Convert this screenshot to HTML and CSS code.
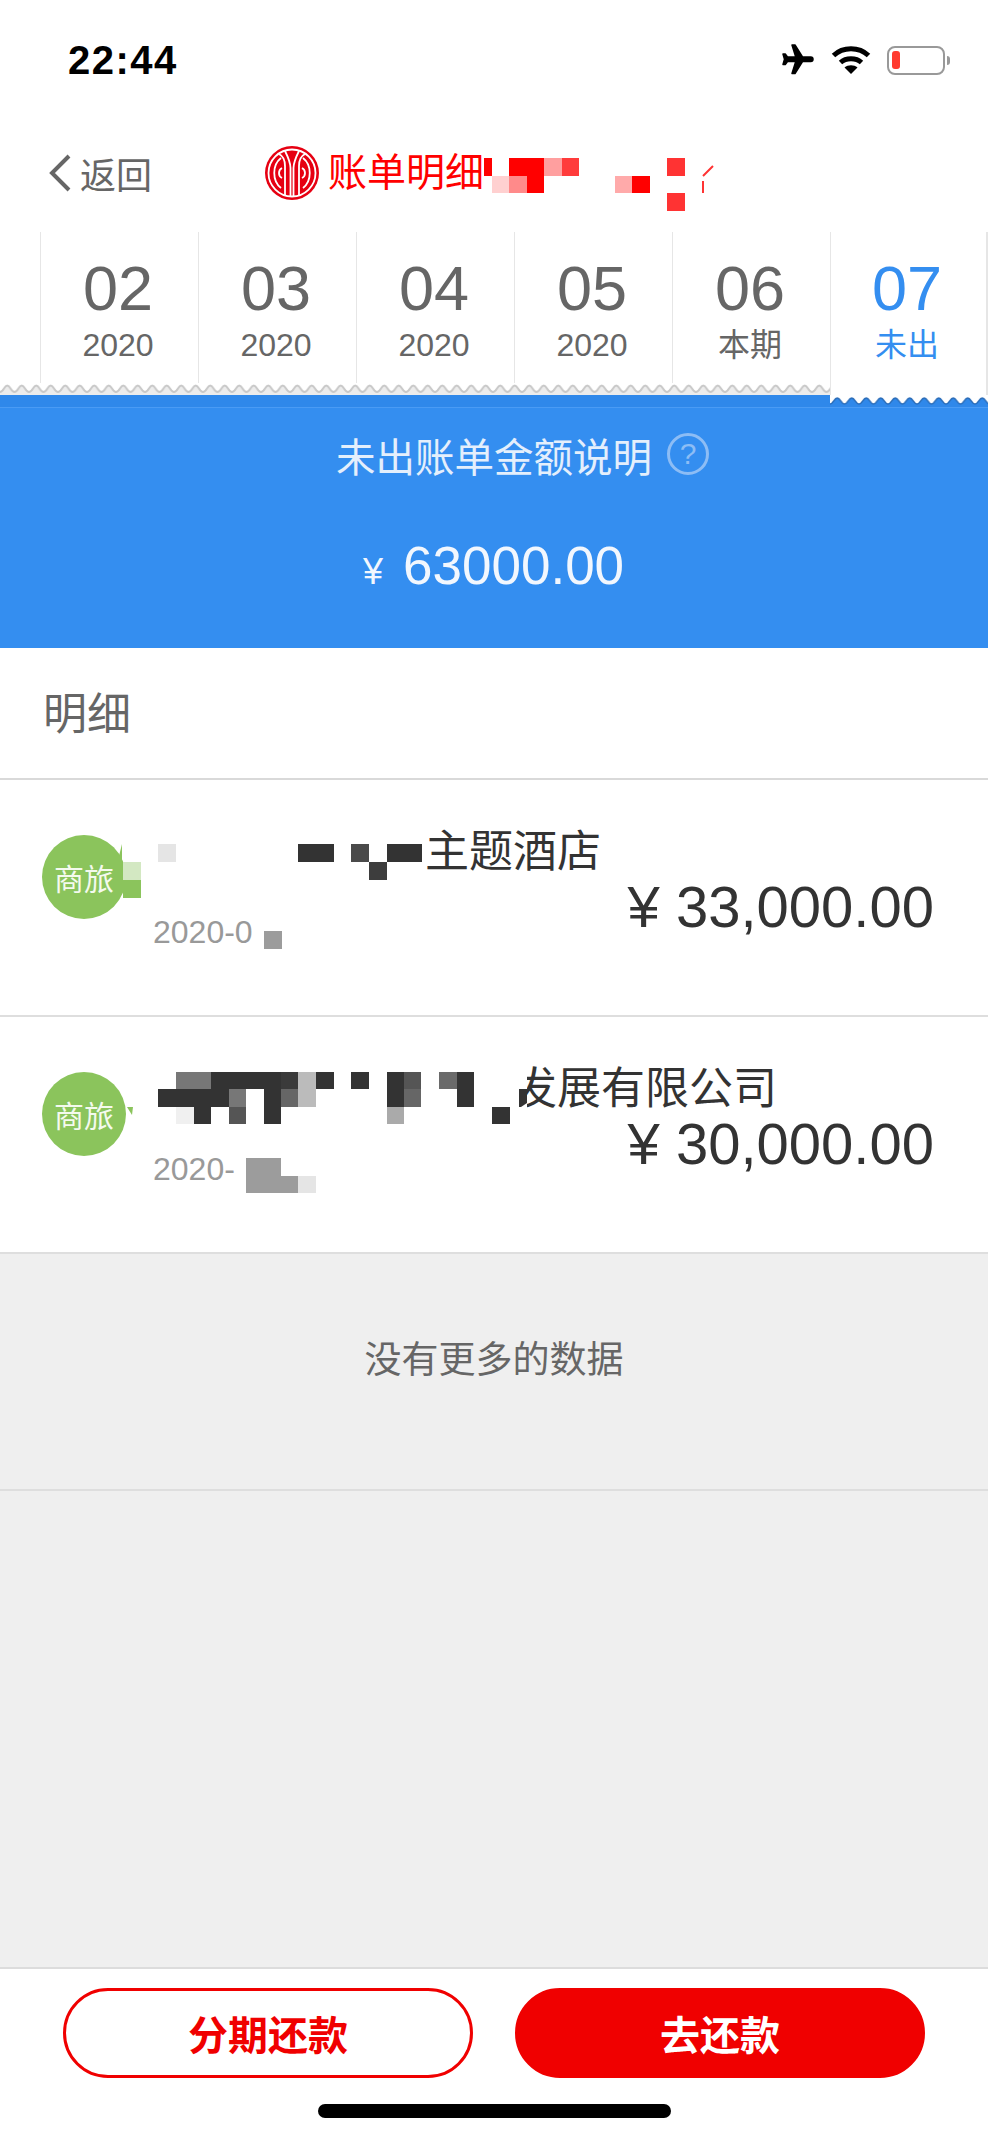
FILE: index.html
```html
<!DOCTYPE html>
<html lang="zh-CN">
<head>
    <meta charset="UTF-8">
    <meta name="viewport" content="width=device-width, initial-scale=1.0">
    <title>账单明细</title>
    <link rel="stylesheet" href="styles.css">
</head>
<body>
    <div class="status-bar">
        <span class="time">22:44</span>
        <div class="status-icons">
            <svg class="icon-plane" width="38" height="36" viewBox="0 0 24 24"><path transform="rotate(90 12 12)" stroke="#000" stroke-width="1" stroke-linejoin="round" d="M21 16v-2l-8-5V3.500c0-.83-.67-1.500-1.500-1.500S10 2.670 10 3.500V9l-8 5v2l8-2.500V19l-2 1.500V22l3.500-1 3.500 1v-1.500L13 19v-5.500l8 2.500z"/></svg>
            <svg class="icon-wifi" width="40" height="30" viewBox="0 0 40 30">
                <path d="M2.500 10.500C12 1.500 28 1.500 37.500 10.500" fill="none" stroke="#000" stroke-width="5"/>
                <path d="M9.500 17.500C15 12.500 25 12.500 30.500 17.500" fill="none" stroke="#000" stroke-width="5"/>
                <path d="M13.500 22.500C17 19.500 23 19.500 26.500 22.500L20 29z"/>
            </svg>
            <div class="battery"><span class="battery-level"></span></div>
            <span class="battery-nub"></span>
        </div>
    </div>

    <div class="nav">
        <div class="back">
            <svg width="24" height="38" viewBox="0 0 24 38"><path d="M21 2 4 19l17 17" fill="none" stroke="#666" stroke-width="4"/></svg>
            <span>返回</span>
        </div>
        <svg class="logo" width="54" height="54" viewBox="0 0 54 54">
            <circle cx="27" cy="27" r="27" fill="#e60012"/>
            <g fill="none" stroke="#fff" stroke-width="1.800">
                <circle cx="27" cy="27" r="23.500"/>
                <path d="M16 12C7 19 7 35 16 42"/>
                <path d="M38 12C47 19 47 35 38 42"/>
                <path d="M17 22C13 24 13 30 17 32"/>
                <path d="M37 22C41 24 41 30 37 32"/>
                <path d="M20 50V20C20 13 18 10 14 8"/>
                <path d="M34 50V20C34 13 36 10 40 8"/>
                <path d="M25.500 50V22C25.500 16 23 11 20 5"/>
                <path d="M28.500 50V22C28.500 16 31 11 34 5"/>
            </g>
        </svg>
        <span class="nav-title">账单明细</span>
        <svg class="title-mosaic" width="240" height="70" viewBox="0 0 240 70">
            <rect x="0" y="15" width="8" height="18" fill="#f00"/>
            <rect x="25" y="15" width="35" height="18" fill="#f00"/>
            <rect x="60" y="15" width="18" height="18" fill="#ff9f9f"/>
            <rect x="78" y="15" width="17" height="18" fill="#ff3b3b"/>
            <rect x="8" y="33" width="17" height="17" fill="#ffd0d0"/>
            <rect x="25" y="33" width="18" height="17" fill="#ff8a8a"/>
            <rect x="43" y="33" width="17" height="17" fill="#f00"/>
            <rect x="131" y="33" width="17" height="17" fill="#ffaaaa"/>
            <rect x="148" y="33" width="18" height="17" fill="#f00"/>
            <rect x="183" y="15" width="18" height="18" fill="#ff3333"/>
            <rect x="183" y="50" width="18" height="18" fill="#ff3333"/>
            <path d="M229 23 219 33M219 38V50" fill="none" stroke="#f33" stroke-width="2"/>
        </svg>
    </div>

    <div class="tabs">
        <div class="tab"><span class="tab-month">02</span><span class="tab-year">2020</span></div>
        <div class="tab"><span class="tab-month">03</span><span class="tab-year">2020</span></div>
        <div class="tab"><span class="tab-month">04</span><span class="tab-year">2020</span></div>
        <div class="tab"><span class="tab-month">05</span><span class="tab-year">2020</span></div>
        <div class="tab"><span class="tab-month">06</span><span class="tab-year">本期</span></div>
        <div class="tab active"><span class="tab-month">07</span><span class="tab-year">未出</span></div>
        <svg class="tab-edge" width="830" height="12">
            <defs>
                <pattern id="edge-grey" width="14.500" height="12" patternUnits="userSpaceOnUse">
                    <path d="M0 9C3.500 9 4 2.500 7.250 2.500C10.500 2.500 11 9 14.500 9V12H0Z" fill="#ececec"/>
                    <path d="M0 9C3.500 9 4 2.500 7.250 2.500C10.500 2.500 11 9 14.500 9" fill="none" stroke="#c8c8c8" stroke-width="2"/>
                </pattern>
            </defs>
            <rect width="830" height="12" fill="url(#edge-grey)"/>
        </svg>
    </div>

    <div class="summary">
        <svg class="active-edge" width="158" height="10">
            <defs>
                <pattern id="edge-white" width="14.500" height="10" patternUnits="userSpaceOnUse">
                    <path d="M0 0H14.500V9C11 9 10.500 3 7.250 3C4 3 3.500 9 0 9Z" fill="#fff"/>
                    <path d="M0 9C3.500 9 4 3 7.250 3C10.500 3 11 9 14.500 9" fill="none" stroke="#2a6cb8" stroke-width="1.500"/>
                </pattern>
            </defs>
            <rect width="158" height="10" fill="url(#edge-white)"/>
        </svg>
        <div class="summary-band"></div>
        <div class="summary-title">
            <span>未出账单金额说明</span>
            <span class="help">?</span>
        </div>
        <div class="summary-amount"><span class="yen">¥</span><span>63000.00</span></div>
    </div>

    <div class="list-head">明细</div>

    <div class="row">
        <div class="avatar">
            商旅
            <svg class="avatar-tail" width="22" height="62" viewBox="0 0 22 62">
                <path d="M3 8V26L0 20z" fill="#8bc45c"/>
                <rect x="4" y="26" width="18" height="18" fill="#d3e8c2"/>
                <rect x="4" y="44" width="18" height="18" fill="#8bc45c"/>
            </svg>
        </div>
        <div class="info">
            <div class="name">
                <svg class="name-mosaic" width="272" height="60" viewBox="0 0 272 60">
                    <rect x="5" y="22" width="18" height="18" fill="#e5e5e5"/>
                    <rect x="145" y="22" width="36" height="18" fill="#333"/>
                    <rect x="198" y="22" width="18" height="18" fill="#4a4a4a"/>
                    <rect x="216" y="40" width="18" height="18" fill="#3d3d3d"/>
                    <rect x="234" y="22" width="35" height="18" fill="#333"/>
                </svg>
                <span>主题酒店</span>
            </div>
            <div class="date">
                <span>2020-0</span>
                <svg width="30" height="44" viewBox="0 0 30 44"><rect x="11" y="19" width="18" height="18" fill="#9c9c9c"/></svg>
            </div>
        </div>
        <div class="amount">¥ 33,000.00</div>
    </div>

    <div class="row">
        <div class="avatar">
            商旅
            <svg class="avatar-tail" width="22" height="62" viewBox="0 0 22 62">
                <path d="M8 34H14L13 42z" fill="#8bc45c"/>
            </svg>
        </div>
        <div class="info">
            <div class="name">
                <svg class="name-mosaic overlap" width="374" height="70" viewBox="0 0 374 70">
                    <rect x="358" y="0" width="16" height="60" fill="#fff"/>
                    <rect x="23" y="13" width="35" height="17" fill="#777"/>
                    <rect x="58" y="13" width="70" height="17" fill="#333"/>
                    <rect x="128" y="13" width="17" height="17" fill="#3a3a3a"/>
                    <rect x="145" y="13" width="18" height="35" fill="#bbb"/>
                    <rect x="163" y="13" width="18" height="17" fill="#333"/>
                    <rect x="198" y="13" width="18" height="17" fill="#333"/>
                    <rect x="234" y="13" width="17" height="35" fill="#333"/>
                    <rect x="251" y="13" width="17" height="17" fill="#555"/>
                    <rect x="286" y="13" width="18" height="17" fill="#6a6a6a"/>
                    <rect x="304" y="13" width="17" height="35" fill="#333"/>
                    <rect x="5" y="30" width="71" height="18" fill="#333"/>
                    <rect x="76" y="30" width="17" height="18" fill="#777"/>
                    <rect x="111" y="30" width="17" height="18" fill="#333"/>
                    <rect x="128" y="30" width="17" height="18" fill="#666"/>
                    <rect x="251" y="30" width="17" height="18" fill="#666"/>
                    <rect x="23" y="48" width="18" height="17" fill="#f0f0f0"/>
                    <rect x="41" y="48" width="17" height="17" fill="#333"/>
                    <rect x="76" y="48" width="17" height="17" fill="#555"/>
                    <rect x="111" y="48" width="17" height="17" fill="#333"/>
                    <rect x="234" y="48" width="17" height="17" fill="#aaa"/>
                    <rect x="339" y="48" width="18" height="17" fill="#333"/>
                    <path d="M366 30H374V44L368 48H366z" fill="#333"/>
                </svg>
                <span>发展有限公司</span>
            </div>
            <div class="date">
                <span>2020-</span>
                <svg width="85" height="44" viewBox="0 0 85 44">
                    <path d="M11 9H46V27H63V44H11z" fill="#9c9c9c"/>
                    <rect x="63" y="27" width="18" height="17" fill="#e5e5e5"/>
                </svg>
            </div>
        </div>
        <div class="amount">¥ 30,000.00</div>
    </div>

    <div class="no-more">没有更多的数据</div>
    <div class="filler"></div>

    <div class="footer">
        <div class="buttons">
            <button type="button" class="btn btn-outline">分期还款</button>
            <button type="button" class="btn btn-solid">去还款</button>
        </div>
        <div class="home-bar"></div>
    </div>
</body>
</html>
```

FILE: styles.css
```css
* {
    box-sizing: border-box;
}

body {
    margin: 0;
    width: 988px;
    height: 2139px;
    display: flex;
    flex-direction: column;
    overflow: hidden;
    background-color: #fff;
    color: #333;
    font-family: "Liberation Sans", "Noto Sans CJK SC", sans-serif;
}

.status-bar {
    height: 100px;
    padding: 20px 38px 0 68px;
    display: flex;
    align-items: center;
    justify-content: space-between;
}

.time {
    font-size: 40px;
    line-height: 48px;
    font-weight: bold;
    letter-spacing: 1.500px;
    color: #000;
}

.status-icons {
    display: flex;
    align-items: center;
}

.icon-plane {
    margin-right: 14px;
}

.icon-wifi {
    margin-right: 16px;
}

.battery {
    width: 58px;
    height: 29px;
    padding: 3px;
    border: 2.500px solid #999;
    border-radius: 8px;
}

.battery-level {
    display: block;
    width: 8px;
    height: 18px;
    border-radius: 3px;
    background-color: #ff3b30;
}

.battery-nub {
    width: 3px;
    height: 9px;
    margin-left: 2px;
    border-radius: 0 3px 3px 0;
    background-color: #999;
}

.nav {
    height: 132px;
    padding: 14px 0 0 48px;
    display: flex;
    align-items: center;
}

.back {
    width: 217px;
    display: flex;
    align-items: center;
    gap: 8px;
    font-size: 36px;
    color: #666;
}

.logo {
    margin-right: 9px;
}

.nav-title {
    font-size: 39px;
    line-height: 60px;
    color: #f00;
}

.title-mosaic {
    flex: none;
    margin-top: 10px;
}

.tabs {
    position: relative;
    height: 163px;
    padding-left: 40px;
    display: flex;
    align-items: flex-start;
}

.tab {
    width: 158px;
    height: 151px;
    padding: 24px 3px 0 0;
    display: flex;
    flex-direction: column;
    align-items: center;
    border-left: 1px solid #e6e6e6;
    color: #666;
}

.tab.active {
    height: 163px;
    border-right: 2px solid #e6e6e6;
    color: #348ef0;
}

.tab-month {
    font-size: 63px;
    line-height: 64px;
}

.tab-year {
    margin-top: 5px;
    font-size: 32px;
    line-height: 40px;
}

.tab-edge {
    position: absolute;
    left: 0;
    bottom: 0;
}

.summary {
    position: relative;
    height: 253px;
    background-color: #348ef0;
    color: #fff;
}

.active-edge {
    position: absolute;
    top: 0;
    right: 0;
}

.summary-band {
    height: 13px;
    border-bottom: 1px solid #4a9bf4;
    background-color: #2f88ea;
}

.summary-title {
    height: 74px;
    margin-top: 9px;
    padding-left: 336px;
    display: flex;
    align-items: center;
    gap: 15px;
    font-size: 39.500px;
    color: #e4effc;
}

.help {
    width: 42px;
    height: 42px;
    border: 3px solid #8dbdf5;
    border-radius: 50%;
    display: flex;
    align-items: center;
    justify-content: center;
    font-size: 30px;
    color: #8dbdf5;
}

.summary-amount {
    margin-top: 43px;
    padding-left: 363px;
    display: flex;
    align-items: baseline;
    gap: 20px;
    font-size: 53px;
    line-height: 64px;
    color: #f2f7fe;
}

.yen {
    font-size: 36px;
}

.list-head {
    height: 132px;
    padding: 0 0 4px 43px;
    display: flex;
    align-items: center;
    border-bottom: 2px solid #d9d9d9;
    font-size: 44px;
    color: #666;
}

.row {
    height: 237px;
    display: flex;
    align-items: flex-start;
    border-bottom: 2px solid #dedede;
}

.avatar {
    position: relative;
    flex: none;
    width: 84px;
    height: 84px;
    margin: 55px 27px 0 42px;
    display: flex;
    align-items: center;
    justify-content: center;
    border-radius: 50%;
    background-color: #8bc45c;
    font-size: 30px;
    color: #f4faee;
}

.avatar-tail {
    position: absolute;
    left: 77px;
    top: 1px;
}

.info {
    flex: 1;
    min-width: 0;
    padding-top: 42px;
    white-space: nowrap;
}

.name {
    height: 60px;
    display: flex;
    align-items: flex-start;
    font-size: 44px;
    line-height: 60px;
    color: #333;
}

.name-mosaic {
    flex: none;
    overflow: visible;
}

.name-mosaic.overlap {
    position: relative;
    margin-right: -14px;
}

.date {
    height: 44px;
    margin-top: 30px;
    display: flex;
    align-items: flex-start;
    font-size: 32px;
    line-height: 40px;
    color: #999;
}

.amount {
    flex: none;
    margin: 95px 54px 0 0;
    font-size: 58px;
    line-height: 64px;
    color: #333;
}

.no-more {
    height: 237px;
    padding-top: 83px;
    border-bottom: 2px solid #dedede;
    background-color: #efefef;
    text-align: center;
    font-size: 37px;
    line-height: 48px;
    color: #666;
}

.filler {
    flex: 1;
    background-color: #efefef;
}

.footer {
    height: 172px;
    padding-top: 19px;
    border-top: 2px solid #dcdcdc;
    background-color: #fff;
}

.buttons {
    padding: 0 0 0 63px;
    display: flex;
    gap: 42px;
}

.btn {
    width: 410px;
    height: 90px;
    border-radius: 45px;
    border: 3px solid #f00000;
    font-family: "Liberation Sans", "Noto Sans CJK SC", sans-serif;
    font-size: 40px;
    font-weight: bold;
    cursor: pointer;
}

.btn-outline {
    background-color: #fff;
    color: #f00000;
}

.btn-solid {
    background-color: #f00000;
    color: #fff;
}

.home-bar {
    width: 353px;
    height: 14px;
    margin: 26px auto 0;
    border-radius: 7px;
    background-color: #000;
}
```
